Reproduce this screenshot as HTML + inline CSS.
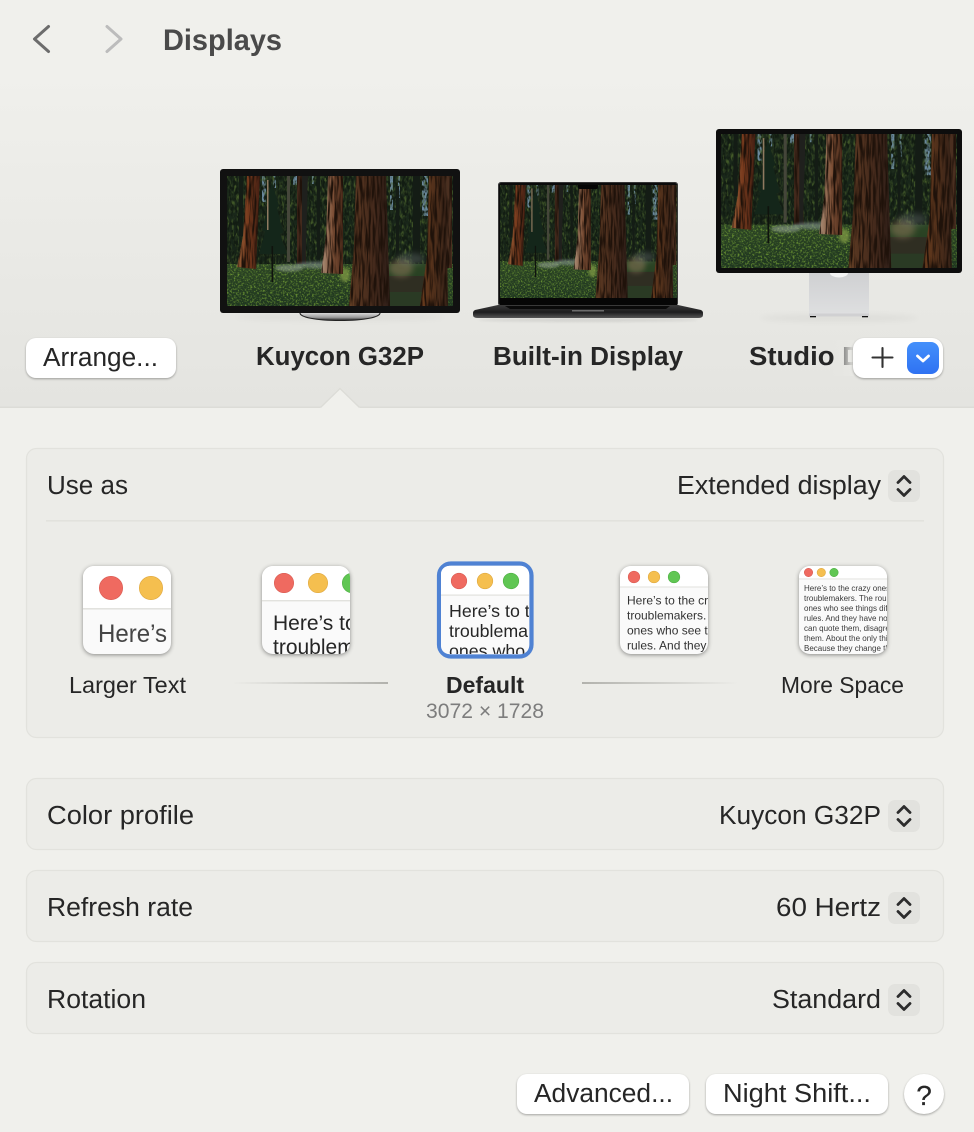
<!DOCTYPE html>
<html lang="en"><head><meta charset="utf-8"><title>Displays</title>
<style>
html,body{margin:0;padding:0;background:#f0f0ec}
svg{display:block}
text{font-family:"Liberation Sans",sans-serif;fill:#262626;font-size:25.5px}
.b{font-weight:700}
.btn{fill:#fff;filter:drop-shadow(0 1px 1px rgba(0,0,0,.32))}
.panel{fill:#ecece8;stroke:#e2e2dd;stroke-width:1.2}
.thumb{fill:#fafafa;filter:drop-shadow(0 1.5px 2px rgba(0,0,0,.42))}
.tb{fill:#fff}
.sep{fill:#e2e2de}
.r{fill:#ef6a60;stroke:#d95b52;stroke-width:.6}
.y{fill:#f5bf4f;stroke:#dfa83f;stroke-width:.6}
.g{fill:#60c653;stroke:#4fb044;stroke-width:.6}
.chev{fill:none;stroke:#2c2c2c;stroke-width:2.8;stroke-linecap:round;stroke-linejoin:round}
</style></head>
<body>
<svg width="974" height="1132" viewBox="0 0 974 1132" xmlns="http://www.w3.org/2000/svg">
<defs>
<linearGradient id="hdr" x1="0" y1="0" x2="0" y2="1"><stop offset="0" stop-color="#f0f0ec"/><stop offset="1" stop-color="#e4e4e0"/></linearGradient>
<linearGradient id="ln1" x1="0" x2="1" y1="0" y2="0"><stop offset="0" stop-color="#b2b2ad" stop-opacity="0"/><stop offset="1" stop-color="#b2b2ad"/></linearGradient>
<linearGradient id="ln2" x1="0" x2="1" y1="0" y2="0"><stop offset="0" stop-color="#b2b2ad"/><stop offset="1" stop-color="#b2b2ad" stop-opacity="0"/></linearGradient>
<linearGradient id="blue" x1="0" x2="0" y1="0" y2="1"><stop offset="0" stop-color="#4490fb"/><stop offset="1" stop-color="#2f72f2"/></linearGradient>
<linearGradient id="fade" x1="0" x2="1" y1="0" y2="0"><stop offset="0" stop-color="#e8e8e4" stop-opacity="0"/><stop offset="1" stop-color="#e8e8e4"/></linearGradient>
<linearGradient id="silver" x1="0" x2="0" y1="0" y2="1"><stop offset="0" stop-color="#cfd0d2"/><stop offset="1" stop-color="#dedfe0"/></linearGradient>
<linearGradient id="steel" x1="0" x2="0" y1="0" y2="1"><stop offset="0" stop-color="#3b3b3b"/><stop offset=".55" stop-color="#1d1d1e"/><stop offset="1" stop-color="#565656"/></linearGradient>
<linearGradient id="foot" x1="0" x2="0" y1="0" y2="1"><stop offset="0" stop-color="#d8d8d8"/><stop offset=".6" stop-color="#9a9a9a"/><stop offset="1" stop-color="#1d1d1d"/></linearGradient>
<linearGradient id="sky" x1="0" x2="0" y1="0" y2="1"><stop offset="0" stop-color="#1c2a1b"/><stop offset=".7" stop-color="#162318"/><stop offset="1" stop-color="#2c3a30"/></linearGradient>
<linearGradient id="grd" x1="0" x2="0" y1="0" y2="1"><stop offset="0" stop-color="#2c4524"/><stop offset="1" stop-color="#1f3620"/></linearGradient>
<linearGradient id="t1" x1="0" x2="1" y1="0" y2="0"><stop offset="0" stop-color="#96603a"/><stop offset=".45" stop-color="#7a3c1e"/><stop offset="1" stop-color="#431f13"/></linearGradient>
<linearGradient id="t2" x1="0" x2="1" y1="0" y2="0"><stop offset="0" stop-color="#ab8f78"/><stop offset=".55" stop-color="#7e5036"/><stop offset="1" stop-color="#4a2a1a"/></linearGradient>
<linearGradient id="t3" x1="0" x2="1" y1="0" y2="0"><stop offset="0" stop-color="#6a4426"/><stop offset=".15" stop-color="#573621"/><stop offset=".6" stop-color="#452a1c"/><stop offset="1" stop-color="#2e1e18"/></linearGradient>
<linearGradient id="t4" x1="0" x2="1" y1="0" y2="0"><stop offset="0" stop-color="#6a3c1d"/><stop offset=".5" stop-color="#51301b"/><stop offset="1" stop-color="#362218"/></linearGradient>
<filter id="leaf" x="0" y="0" width="100%" height="100%" color-interpolation-filters="sRGB"><feTurbulence type="fractalNoise" baseFrequency=".55" numOctaves="2" seed="7"/><feColorMatrix values="0 0 0 0 .42  0 0 0 0 .58  0 0 0 0 .2  3.2 0 0 0 -1.55"/></filter>
<filter id="fol" x="0" y="0" width="100%" height="100%" color-interpolation-filters="sRGB"><feTurbulence type="fractalNoise" baseFrequency=".4 .16" numOctaves="2" seed="4"/><feColorMatrix values="0 0 0 0 .27  0 0 0 0 .36  0 0 0 0 .16  3 0 0 0 -1.35"/></filter>
<filter id="leafd" x="0" y="0" width="100%" height="100%" color-interpolation-filters="sRGB"><feTurbulence type="fractalNoise" baseFrequency=".45 .2" numOctaves="2" seed="3"/><feColorMatrix values="0 0 0 0 .07  0 0 0 0 .11  0 0 0 0 .07  5 0 0 0 -2.2"/></filter>
<filter id="bark" x="0" y="0" width="100%" height="100%" color-interpolation-filters="sRGB"><feTurbulence type="fractalNoise" baseFrequency=".5 .04" numOctaves="2" seed="11" result="n"/><feColorMatrix in="n" values="0 0 0 0 .12  0 0 0 0 .07  0 0 0 0 .04  4 0 0 0 -1.6" result="d"/><feComposite in="d" in2="SourceAlpha" operator="in" result="c"/><feMerge><feMergeNode in="SourceGraphic"/><feMergeNode in="c"/></feMerge></filter>
<filter id="bl3" x="-30%" y="-50%" width="160%" height="200%" color-interpolation-filters="sRGB"><feGaussianBlur stdDeviation="3"/></filter>
<filter id="bl1" x="-30%" y="-50%" width="160%" height="200%" color-interpolation-filters="sRGB"><feGaussianBlur stdDeviation="1.2"/></filter>
<filter id="soft" x="0" y="0" width="100%" height="100%" color-interpolation-filters="sRGB"><feGaussianBlur stdDeviation=".35"/></filter>
<clipPath id="c1"><rect x="83" y="566" width="88" height="88" rx="11"/></clipPath>
<clipPath id="c2"><rect x="262" y="566" width="88" height="88" rx="11"/></clipPath>
<clipPath id="c3"><rect x="441" y="566" width="88" height="88" rx="8"/></clipPath>
<clipPath id="c4"><rect x="620" y="566" width="88" height="88" rx="11"/></clipPath>
<clipPath id="c5"><rect x="799" y="566" width="88" height="88" rx="11"/></clipPath>
<symbol id="forest" viewBox="0 0 226 130" preserveAspectRatio="none">
<g filter="url(#soft)">
<rect width="226" height="130" fill="url(#sky)"/>
<g fill="#7d9fbc" opacity=".8"><rect x="35" y="0" width="4" height="26"/><rect x="46" y="0" width="3" height="12"/><rect x="66" y="0" width="5" height="9"/><rect x="163" y="0" width="3" height="34"/><rect x="171" y="0" width="2" height="22"/><rect x="195" y="0" width="6" height="40"/><rect x="85" y="0" width="2" height="8"/></g>
<rect width="226" height="92" filter="url(#fol)"/>
<rect width="226" height="92" filter="url(#leafd)"/>
<path d="M45 6 L52 30 L50 32 L56 56 L53 58 L60 78 L32 78 L38 56 L35 54 L41 30 L39 28Z" fill="#14261a"/>
<g fill="#141c15"><rect x="186" y="0" width="7" height="86"/><rect x="169" y="10" width="3" height="70"/><rect x="12" y="0" width="4" height="60"/><rect x="90" y="0" width="3" height="84"/></g>
<rect x="60" y="0" width="3" height="86" fill="#45463a"/>
<rect x="40" y="4" width="1.5" height="50" fill="#8f7a60"/>
<path d="M70 0H78L79 90H70Z" fill="#43291c" filter="url(#bark)"/>
<path d="M75 0H81L78 100H75Z" fill="#1f201d"/>
<rect y="88" width="226" height="42" fill="url(#grd)"/>
<path d="M135 100 H205 V130 H135Z" fill="#2f2e22"/>
<path d="M160 116 H200 V130 H160Z" fill="#2a3a24"/>
<ellipse cx="174" cy="92" rx="12" ry="9" fill="#8a7558" opacity=".55" filter="url(#bl3)"/>
<rect y="88" width="160" height="42" filter="url(#leaf)"/>
<rect x="205" y="88" width="21" height="42" filter="url(#leaf)" opacity=".7"/>
<ellipse cx="118" cy="99" rx="5" ry="7" fill="#7f9a44" opacity=".75" filter="url(#bl1)"/>
<ellipse cx="62" cy="92" rx="14" ry="3.5" fill="#9aa89a" opacity=".55" filter="url(#bl1)"/>
<ellipse cx="92" cy="89" rx="24" ry="3.5" fill="#8f9d9c" opacity=".5" filter="url(#bl1)"/>
<ellipse cx="184" cy="83" rx="14" ry="6" fill="#7f8c8c" opacity=".3" filter="url(#bl3)"/>
<rect x="44.5" y="70" width="1.6" height="36" fill="#0f130d"/>
<path d="M219 0H225V92H220Z" fill="#4a2f20" filter="url(#bark)"/>
<path d="M20 0H33L29 93 L10 91 L16 60Z" fill="url(#t1)" filter="url(#bark)"/>
<path d="M101 0H116L116 98 L94 97 L99 60Z" fill="url(#t2)" filter="url(#bark)"/>
<path d="M129 0H159L163 130H122L127 70Z" fill="url(#t3)" filter="url(#bark)"/>
<path d="M202 0H219L221 130H193L200 80Z" fill="url(#t4)" filter="url(#bark)"/>
</g>
</symbol>
</defs>

<rect width="974" height="1132" fill="#f0f0ec"/>
<rect y="70" width="974" height="337" fill="url(#hdr)"/>
<rect y="406.5" width="974" height="1.5" fill="#dcdcd7"/>
<path d="M320 408 L340 388 L360 408Z" fill="#f0f0ec"/>
<path d="M320.5 407.5 L340 388.5 L359.5 407.5" fill="none" stroke="#dcdcd7" stroke-width="1.3"/>

<path d="M48.5 26.5 L34.5 39 L48.5 51.5" fill="none" stroke="#6c6c6c" stroke-width="3" stroke-linecap="round" stroke-linejoin="round"/>
<path d="M107 26.5 L121 39 L107 51.5" fill="none" stroke="#bcbcbc" stroke-width="3" stroke-linecap="round" stroke-linejoin="round"/>
<text class="b" x="163" y="50" style="font-size:29.5px;fill:#4a4a4a" textLength="119" lengthAdjust="spacingAndGlyphs">Displays</text>

<!-- External monitor -->
<ellipse cx="340" cy="317" rx="105" ry="4" fill="#000" opacity=".035" filter="url(#bl3)"/>
<rect x="220" y="169" width="240" height="144" rx="3" fill="#111"/>
<use href="#forest" x="227" y="176" width="226" height="130"/>
<path d="M300 313 H380 C380 317 365 320.5 340 320.5 C315 320.5 300 317 300 313Z" fill="url(#foot)"/>
<path d="M300 313 C300 317 315 320.5 340 320.5 C365 320.5 380 317 380 313" fill="none" stroke="#222" stroke-width="1.1"/>

<!-- Laptop -->
<ellipse cx="588" cy="320" rx="110" ry="2" fill="#000" opacity=".08" filter="url(#bl1)"/>
<rect x="498" y="182" width="180" height="124" rx="3" fill="#0b0b0b"/>
<rect x="498.5" y="182.5" width="179" height="123" rx="3" fill="none" stroke="#444" stroke-width=".8"/>
<use href="#forest" x="500" y="185" width="177" height="113"/>
<path d="M578 185 H598 V187 Q598 189 596 189 H580 Q578 189 578 187Z" fill="#050505"/>
<rect x="500" y="298" width="177" height="7" fill="#060606"/>
<path d="M498 305 H678 L701 310 Q703 311 703 313 V315 Q703 318 698 318 H478 Q473 318 473 315 V313 Q473 311 475 310Z" fill="url(#steel)"/>
<path d="M505 306 H670 L666 309 H510Z" fill="#0a0a0a"/>
<rect x="572" y="310" width="32" height="1.5" fill="#6c6c6c"/>

<!-- Studio Display -->
<ellipse cx="839" cy="318" rx="80" ry="4" fill="#000" opacity=".035" filter="url(#bl3)"/>
<rect x="809" y="273" width="60" height="41" fill="url(#silver)"/>
<ellipse cx="839" cy="273" rx="9" ry="4.5" fill="#f4f4f4"/>
<rect x="809" y="313.5" width="60" height="3" fill="#d0d0d2"/>
<rect x="810" y="316" width="6" height="1.3" fill="#111"/><rect x="862" y="316" width="6" height="1.3" fill="#111"/>
<rect x="716" y="129" width="246" height="144" rx="3" fill="#0d0d0d"/>
<use href="#forest" x="721" y="134" width="236" height="134"/>

<!-- Names -->
<text class="b" x="256" y="365" textLength="168" lengthAdjust="spacingAndGlyphs">Kuycon G32P</text>
<text class="b" x="493" y="365" textLength="190" lengthAdjust="spacingAndGlyphs">Built-in Display</text>
<text class="b" x="749" y="365" textLength="191" lengthAdjust="spacingAndGlyphs">Studio Display</text>
<rect x="832" y="340" width="22" height="36" fill="url(#fade)"/>

<!-- Arrange -->
<rect class="btn" x="26" y="338" width="150" height="40" rx="10"/>
<text x="43" y="366" textLength="115" lengthAdjust="spacingAndGlyphs">Arrange...</text>

<!-- add/dropdown -->
<rect class="btn" x="853" y="338" width="90" height="40" rx="11"/>
<path d="M882.5 348 V367 M872.5 357.5 H892.5" fill="none" stroke="#333" stroke-width="2.1" stroke-linecap="round"/>
<rect x="907" y="342" width="32" height="32" rx="8" fill="url(#blue)"/>
<path d="M917.5 356 L923 361 L928.5 356" fill="none" stroke="#fff" stroke-width="2.8" stroke-linecap="round" stroke-linejoin="round"/>

<!-- Use as panel -->
<rect class="panel" x="26.5" y="448.5" width="917" height="289" rx="10"/>
<text x="47" y="494" textLength="81" lengthAdjust="spacingAndGlyphs">Use as</text>
<text x="677" y="494" textLength="204" lengthAdjust="spacingAndGlyphs">Extended display</text>
<rect x="888" y="470" width="32" height="32" rx="7" fill="#e2e2de"/>
<path class="chev" d="M898 482.5 L904 476.5 L910 482.5 M898 489.5 L904 495.5 L910 489.5"/>
<rect x="46" y="520" width="878" height="1.6" fill="#e2e2dd"/>

<!-- Thumb 1 -->
<rect class="thumb" x="83" y="566" width="88" height="88" rx="11"/>
<g clip-path="url(#c1)">
<rect x="83" y="566" width="88" height="43" class="tb"/><rect x="83" y="608" width="88" height="1.6" class="sep"/>
<circle class="r" cx="111" cy="588" r="11.7"/><circle class="y" cx="151" cy="588" r="11.7"/>
<text x="98" y="642" style="font-size:25px;fill:#454545" textLength="69" lengthAdjust="spacingAndGlyphs">Here’s</text>
</g>
<!-- Thumb 2 -->
<rect class="thumb" x="262" y="566" width="88" height="88" rx="11"/>
<g clip-path="url(#c2)">
<rect x="262" y="566" width="88" height="35" class="tb"/><rect x="262" y="600" width="88" height="1.4" class="sep"/>
<circle class="r" cx="284" cy="583" r="9.7"/><circle class="y" cx="318" cy="583" r="9.7"/><circle class="g" cx="352" cy="583" r="9.7"/>
<text x="273" y="630" style="font-size:21px">Here’s to the</text>
<text x="273" y="654" style="font-size:21px">troublemakers</text>
</g>
<!-- Thumb 3 -->
<rect x="439" y="563.5" width="92.5" height="93" rx="12" fill="#f4f4f4" stroke="#4f82d3" stroke-width="4.2"/>
<rect x="441" y="566" width="88" height="88" rx="8" fill="#fafafa"/>
<g clip-path="url(#c3)">
<rect x="441" y="566" width="88" height="29" class="tb"/><rect x="441" y="594.5" width="88" height="1.2" class="sep"/>
<circle class="r" cx="459" cy="581" r="7.8"/><circle class="y" cx="485" cy="581" r="7.8"/><circle class="g" cx="511" cy="581" r="7.8"/>
<text x="449" y="617" style="font-size:17.8px">Here’s to the</text>
<text x="449" y="637" style="font-size:17.8px">troublemakers</text>
<text x="449" y="657" style="font-size:17.8px">ones who see</text>
</g>
<!-- Thumb 4 -->
<rect class="thumb" x="620" y="566" width="88" height="88" rx="11"/>
<g clip-path="url(#c4)">
<rect x="620" y="566" width="88" height="21" class="tb"/><rect x="620" y="586.5" width="88" height="1" class="sep"/>
<circle class="r" cx="634" cy="577" r="5.8"/><circle class="y" cx="654" cy="577" r="5.8"/><circle class="g" cx="674" cy="577" r="5.8"/>
<text x="627" y="604.5" style="font-size:12px;fill:#333">Here’s to the crazy</text>
<text x="627" y="619.5" style="font-size:12px;fill:#333">troublemakers. The</text>
<text x="627" y="634.5" style="font-size:12px;fill:#333">ones who see things</text>
<text x="627" y="649.5" style="font-size:12px;fill:#333">rules. And they have</text>
</g>
<!-- Thumb 5 -->
<rect class="thumb" x="799" y="566" width="88" height="88" rx="11"/>
<g clip-path="url(#c5)">
<rect x="799" y="566" width="88" height="13" class="tb"/><rect x="799" y="578.5" width="88" height=".9" class="sep"/>
<circle class="r" cx="808.5" cy="572.5" r="4.2"/><circle class="y" cx="821.3" cy="572.5" r="4.2"/><circle class="g" cx="834" cy="572.5" r="4.2"/>
<text x="804" y="591" style="font-size:8px;fill:#3a3a3a">Here’s to the crazy ones. The misfits.</text>
<text x="804" y="601" style="font-size:8px;fill:#3a3a3a">troublemakers. The round pegs in</text>
<text x="804" y="611" style="font-size:8px;fill:#3a3a3a">ones who see things differently.</text>
<text x="804" y="621" style="font-size:8px;fill:#3a3a3a">rules. And they have no respect</text>
<text x="804" y="631" style="font-size:8px;fill:#3a3a3a">can quote them, disagree with</text>
<text x="804" y="641" style="font-size:8px;fill:#3a3a3a">them. About the only thing you</text>
<text x="804" y="651" style="font-size:8px;fill:#3a3a3a">Because they change things.</text>
</g>

<text x="69" y="693" style="font-size:23px" textLength="117" lengthAdjust="spacingAndGlyphs">Larger Text</text>
<text class="b" x="446" y="693" style="font-size:23px" textLength="78" lengthAdjust="spacingAndGlyphs">Default</text>
<text x="426" y="718" style="font-size:21px;fill:#7d7d7d" textLength="118" lengthAdjust="spacingAndGlyphs">3072 × 1728</text>
<text x="781" y="693" style="font-size:23px" textLength="123" lengthAdjust="spacingAndGlyphs">More Space</text>
<rect x="232" y="682" width="156" height="2" fill="url(#ln1)"/>
<rect x="582" y="682" width="156" height="2" fill="url(#ln2)"/>

<!-- Rows -->
<rect class="panel" x="26.5" y="778.5" width="917" height="71" rx="10"/>
<text x="47" y="824" textLength="147" lengthAdjust="spacingAndGlyphs">Color profile</text>
<text x="719" y="824" textLength="162" lengthAdjust="spacingAndGlyphs">Kuycon G32P</text>
<rect x="888" y="800" width="32" height="32" rx="7" fill="#e2e2de"/>
<path class="chev" d="M898 812.5 L904 806.5 L910 812.5 M898 819.5 L904 825.5 L910 819.5"/>

<rect class="panel" x="26.5" y="870.5" width="917" height="71" rx="10"/>
<text x="47" y="916" textLength="146" lengthAdjust="spacingAndGlyphs">Refresh rate</text>
<text x="776" y="916" textLength="105" lengthAdjust="spacingAndGlyphs">60 Hertz</text>
<rect x="888" y="892" width="32" height="32" rx="7" fill="#e2e2de"/>
<path class="chev" d="M898 904.5 L904 898.5 L910 904.5 M898 911.5 L904 917.5 L910 911.5"/>

<rect class="panel" x="26.5" y="962.5" width="917" height="71" rx="10"/>
<text x="47" y="1008" textLength="99" lengthAdjust="spacingAndGlyphs">Rotation</text>
<text x="772" y="1008" textLength="109" lengthAdjust="spacingAndGlyphs">Standard</text>
<rect x="888" y="984" width="32" height="32" rx="7" fill="#e2e2de"/>
<path class="chev" d="M898 996.5 L904 990.5 L910 996.5 M898 1003.5 L904 1009.5 L910 1003.5"/>

<!-- Footer -->
<rect class="btn" x="517" y="1074" width="172" height="40" rx="10"/>
<text x="534" y="1102" textLength="139" lengthAdjust="spacingAndGlyphs">Advanced...</text>
<rect class="btn" x="706" y="1074" width="182" height="40" rx="10"/>
<text x="723" y="1102" textLength="148" lengthAdjust="spacingAndGlyphs">Night Shift...</text>
<circle class="btn" cx="924" cy="1094" r="20"/>
<text x="924" y="1105" text-anchor="middle" style="font-size:28px;stroke:#262626;stroke-width:.2">?</text>
</svg>
</body></html>
